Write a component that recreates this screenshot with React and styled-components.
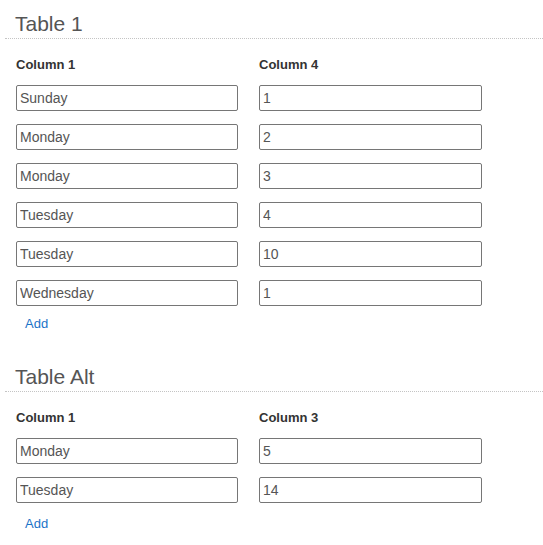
import React from "react";
import styled, { createGlobalStyle } from "styled-components";

const Global = createGlobalStyle`
  html, body { margin: 0; padding: 0; background: #fff; }
  body { font-family: "Liberation Sans", Arial, sans-serif; }
`;

const Page = styled.div`
  padding-left: 5px;
  display: flex;
  flex-direction: column;
`;

const Section = styled.section`
  display: flex;
  flex-direction: column;
  & + & { margin-top: 21px; }
`;

const Heading = styled.h2`
  margin: 0;
  padding: 12px 0 2px 10px;
  font-size: 21px;
  line-height: 24px;
  font-weight: normal;
  color: #555;
  border-bottom: 1px dotted #c4c4c4;
`;

const Grid = styled.div`
  display: grid;
  grid-template-columns: 222px 223px;
  column-gap: 21px;
  row-gap: 13px;
  padding-left: 11px;
  margin-top: 18px;
`;

const ColHead = styled.div`
  font-size: 13px;
  line-height: 16px;
  font-weight: bold;
  color: #333;
  margin-bottom: -1px;
`;

const Field = styled.input`
  box-sizing: border-box;
  width: 100%;
  height: 26px;
  margin: 0;
  padding: 0 3px;
  border: 1px solid #767676;
  border-radius: 2px;
  font-family: "Liberation Sans", Arial, sans-serif;
  font-size: 14px;
  color: #555;
  background: #fff;
  outline: none;
`;

const AddLink = styled.a`
  align-self: flex-start;
  margin: ${(p) => p.$gap}px 0 0 20px;
  font-size: 13px;
  line-height: 16px;
  color: #1a73c8;
  text-decoration: none;
  cursor: pointer;
`;

const tables = [
  {
    title: "Table 1",
    cols: ["Column 1", "Column 4"],
    addGap: 10,
    rows: [
      ["Sunday", "1"],
      ["Monday", "2"],
      ["Monday", "3"],
      ["Tuesday", "4"],
      ["Tuesday", "10"],
      ["Wednesday", "1"],
    ],
  },
  {
    title: "Table Alt",
    cols: ["Column 1", "Column 3"],
    addGap: 13,
    rows: [
      ["Monday", "5"],
      ["Tuesday", "14"],
    ],
  },
];

function Table({ title, cols, rows, addGap }) {
  return (
    <Section>
      <Heading>{title}</Heading>
      <Grid>
        {cols.map((c) => (
          <ColHead key={c}>{c}</ColHead>
        ))}
        {rows.map((r, i) =>
          r.map((v, j) => <Field key={`${i}-${j}`} defaultValue={v} />)
        )}
      </Grid>
      <AddLink $gap={addGap}>Add</AddLink>
    </Section>
  );
}

export default function App() {
  return (
    <>
      <Global />
      <Page>
        {tables.map((t) => (
          <Table key={t.title} {...t} />
        ))}
      </Page>
    </>
  );
}
